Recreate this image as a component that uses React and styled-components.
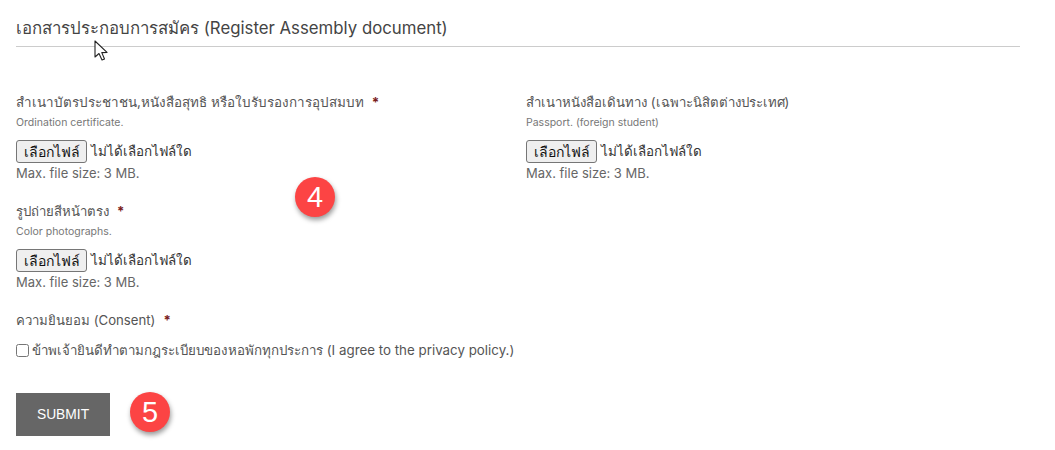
import React from "react";
import styled, { createGlobalStyle } from "styled-components";

const GlobalStyle = createGlobalStyle`
    body {
        margin: 0;
        background: #fff;
        font-family: Inter, "Noto Sans", "Liberation Sans", sans-serif;
    }
`;

const App = () => {
    return (
        <>
            <GlobalStyle />
            <Page>
                <Heading>เอกสารประกอบการสมัคร (Register Assembly document)</Heading>
                <Cursor viewBox="0 0 14 22">
                    <path d="M1 1 L1 17 L5 13.5 L8 20 L10.5 19 L7.8 12.6 L13 12.4 Z" fill="#fff" stroke="#222" strokeWidth="1.1" strokeLinejoin="round" />
                </Cursor>
                <Fields>
                    <Column>
                        <FileField
                            label="สำเนาบัตรประชาชน,หนังสือสุทธิ หรือใบรับรองการอุปสมบท"
                            hint="Ordination certificate."
                            size={13.45}
                            required
                        />
                        <FileField label="รูปถ่ายสีหน้าตรง" hint="Color photographs." required />
                    </Column>
                    <Column>
                        <FileField
                            label="สำเนาหนังสือเดินทาง (เฉพาะนิสิตต่างประเทศ)"
                            hint="Passport. (foreign student)"
                        />
                    </Column>
                </Fields>
                <Consent>
                    <Label>
                        ความยินยอม (Consent)<Star>*</Star>
                    </Label>
                    <CheckRow>
                        <Check type="checkbox" readOnly />
                        ข้าพเจ้ายินดีทำตามกฎระเบียบของหอพักทุกประการ (I agree to the privacy policy.)
                    </CheckRow>
                </Consent>
                <SubmitRow>
                    <Submit>SUBMIT</Submit>
                </SubmitRow>
                <Badge $left={295} $top={177}>4</Badge>
                <Badge $left={130} $top={392}>5</Badge>
            </Page>
        </>
    );
};

const FileField = ({ label, hint, size, required }) => (
    <Field>
        <Label $size={size}>
            {label}
            {required && <Star>*</Star>}
        </Label>
        <Hint>{hint}</Hint>
        <Picker>
            <PickButton type="button">เลือกไฟล์</PickButton>
            <PickStatus>ไม่ได้เลือกไฟล์ใด</PickStatus>
        </Picker>
        <Limit>Max. file size: 3 MB.</Limit>
    </Field>
);

export default App;

const Page = styled.div`
    position: relative;
    width: 1055px;
    height: 450px;
    box-sizing: border-box;
    padding: 17px 35px 0 16px;
    overflow: hidden;
    color: #555;
`;

const Heading = styled.h2`
    margin: 0;
    height: 29px;
    border-bottom: 1px solid #ccc;
    font-size: 16.8px;
    font-weight: 400;
    line-height: 23px;
    color: #444;
`;

const Fields = styled.div`
    display: grid;
    grid-template-columns: 510px 1fr;
    margin-top: 45px;
`;

const Column = styled.div`
    display: flex;
    flex-direction: column;
    gap: 18px;
`;

const Field = styled.div`
    display: flex;
    flex-direction: column;
`;

const Label = styled.div`
    font-size: ${(props) => props.$size || 13.2}px;
    line-height: 20px;
    color: #555;
`;

const Star = styled.span`
    margin-left: 8px;
    color: #7a1c1c;
    font-weight: 700;
`;

const Hint = styled.div`
    margin-top: 2px;
    font-size: 10.5px;
    line-height: 18px;
    color: #777;
`;

const Picker = styled.div`
    display: flex;
    align-items: center;
    gap: 4px;
    margin-top: 8px;
`;

const PickButton = styled.button`
    width: 71px;
    height: 23px;
    padding: 0;
    border: 1px solid #767676;
    border-radius: 3px;
    background: #efefef;
    color: #111;
    font-family: inherit;
    font-size: 14px;
`;

const PickStatus = styled.span`
    font-size: 13.4px;
    color: #333;
`;

const Limit = styled.div`
    font-size: 13px;
    line-height: 20px;
    color: #666;
`;

const Consent = styled.div`
    display: flex;
    flex-direction: column;
    margin-top: 18px;
`;

const CheckRow = styled.label`
    display: flex;
    align-items: center;
    gap: 3px;
    margin-top: 10px;
    font-size: 13.35px;
    line-height: 20px;
    color: #555;
`;

const Check = styled.input`
    width: 13px;
    height: 13px;
    margin: 0;
`;

const SubmitRow = styled.div`
    margin-top: 33px;
`;

const Submit = styled.button`
    width: 94px;
    height: 43px;
    border: 0;
    background: #666;
    color: #fff;
    font-family: "Liberation Sans", sans-serif;
    font-size: 13.8px;
`;

const Badge = styled.div`
    position: absolute;
    left: ${(props) => props.$left}px;
    top: ${(props) => props.$top}px;
    width: 40px;
    height: 40px;
    border-radius: 50%;
    background: #fc4444;
    box-shadow: 1px 3px 5px rgba(0, 0, 0, 0.4);
    color: #fff;
    font-family: "Liberation Sans", sans-serif;
    font-size: 29px;
    line-height: 40px;
    text-align: center;
`;

const Cursor = styled.svg`
    position: absolute;
    left: 94px;
    top: 40px;
    width: 14px;
    height: 22px;
`;
